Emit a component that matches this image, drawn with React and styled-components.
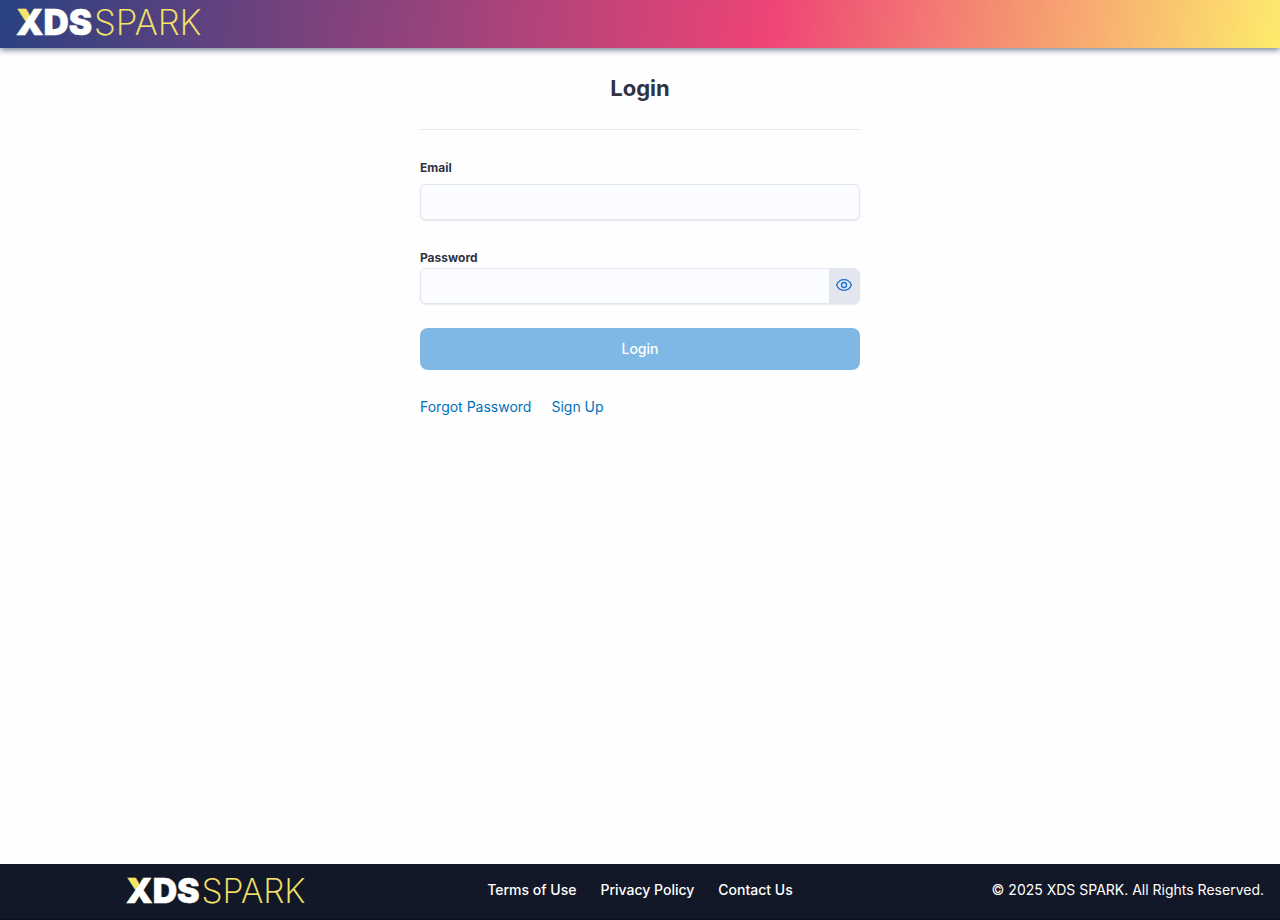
import React, { useId, useState } from "react";
import styled, { createGlobalStyle } from "styled-components";

const GlobalStyle = createGlobalStyle`
  *, *::before, *::after { box-sizing: border-box; }
  body {
    margin: 0;
    background: #fefefe;
    color: #2f3342;
    font-family: Inter, "Liberation Sans", sans-serif;
    font-size: 14px;
    line-height: 20px;
  }
`;

const Page = styled.div`
  display: flex;
  flex-direction: column;
  min-height: 100vh;
`;

const Header = styled.header`
  display: flex;
  align-items: center;
  height: 48px;
  padding: 0 16px 2px;
  background: linear-gradient(99deg, #294182, #ee4476 60%, #fdeb6d);
  box-shadow: 0 2px 6px rgba(24, 36, 72, 0.6);
`;

const LogoLink = styled.a`
  display: block;
  line-height: 0;
`;

const LogoSvg = styled.svg`
  display: block;
  width: ${(p) => p.$width}px;
  height: auto;
  overflow: visible;
`;

const Main = styled.main`
  flex: 1;
  width: 100%;
  max-width: 472px;
  margin: 0 auto;
  padding: 24px 16px;
`;

const Title = styled.h1`
  margin: 0;
  padding-bottom: 25px;
  border-bottom: 1px solid #e2e6ef;
  font-size: 22px;
  line-height: 32px;
  font-weight: 700;
  text-align: center;
`;

const Form = styled.form`
  display: flex;
  flex-direction: column;
  padding-top: 28px;
`;

const Field = styled.div`
  display: flex;
  flex-direction: column;
  gap: ${(p) => p.$gap}px;
  margin-bottom: ${(p) => p.$after}px;
`;

const Label = styled.label`
  font-size: 12px;
  line-height: 20px;
  font-weight: 700;
`;

const InputShell = styled.div`
  display: flex;
  height: 36px;
  overflow: hidden;
  border: 1px solid #e2e6ef;
  border-radius: 6px;
  background: #fbfcff;
  box-shadow: 0 1px 2px rgba(40, 50, 80, 0.1);
`;

const Input = styled.input`
  flex: 1;
  min-width: 0;
  padding: 0 12px;
  border: 0;
  outline: 0;
  background: transparent;
  color: inherit;
  font: inherit;
`;

const RevealButton = styled.button`
  display: flex;
  justify-content: center;
  width: 30px;
  padding: 8px 0 0;
  border: 0;
  background: #e3e6ee;
  color: #1b6fd0;
  cursor: pointer;
`;

const SubmitButton = styled.button`
  height: 42px;
  border: 0;
  border-radius: 8px;
  background: #7fb8e5;
  color: #fff;
  font: inherit;
  font-weight: 500;
`;

const FormLinks = styled.nav`
  display: flex;
  gap: 20px;
  padding-top: 27px;
`;

const TextLink = styled.a`
  color: #0071bd;
  text-decoration: none;
`;

const Footer = styled.footer`
  display: grid;
  grid-template-columns: repeat(3, 1fr);
  gap: 24px;
  align-items: center;
  min-height: 56px;
  padding: 0 16px 3px;
  border-bottom: 1px solid #0b101d;
  background: #121827;
  color: #fff;
  font-weight: 500;
`;

const FooterBrand = styled.div`
  display: flex;
  justify-content: center;
  padding-top: 4px;
`;

const FooterNav = styled.nav`
  display: flex;
  justify-content: center;
  gap: 24px;
  white-space: nowrap;
`;

const FooterLink = styled.a`
  color: inherit;
  text-decoration: none;
`;

const Copyright = styled.p`
  margin: 0;
  font-weight: 400;
  text-align: right;
`;

function Logo({ width }) {
  const fill = useId();
  return (
    <LogoLink href="#" aria-label="XDS Spark home">
      <LogoSvg $width={width} viewBox="0 0 186 26">
        <defs>
          <linearGradient id={fill} gradientUnits="userSpaceOnUse" x1="0" y1="0" x2="25" y2="18">
            <stop offset="0.47" stopColor="#f7e56a" />
            <stop offset="0.47" stopColor="#fff" />
          </linearGradient>
        </defs>
        <text
          y="25"
          fontFamily="Inter"
          fontSize="35"
          fontWeight="900"
          fill={`url(#${fill})`}
          stroke={`url(#${fill})`}
          strokeWidth="0.5"
        >
          XDS
        </text>
        <text
          x="78"
          y="25"
          fontFamily="Inter"
          fontSize="35"
          fontWeight="200"
          fill="#f7e56a"
          stroke="#f7e56a"
          strokeWidth="0.2"
        >
          SPARK
        </text>
      </LogoSvg>
    </LogoLink>
  );
}

function EyeIcon() {
  return (
    <svg width="16" height="16" viewBox="0 0 16 16" fill="none" stroke="currentColor" strokeWidth="1.3" aria-hidden="true">
      <path d="M.6 8C2 4.600 4.700 2.700 8 2.700S14 4.600 15.400 8C14 11.400 11.300 13.300 8 13.300S2 11.400.6 8Z" />
      <circle cx="8" cy="8" r="2.500" />
    </svg>
  );
}

export default function App() {
  const [visible, setVisible] = useState(false);
  return (
    <Page>
      <GlobalStyle />
      <Header>
        <Logo width={186} />
      </Header>
      <Main>
        <Title>Login</Title>
        <Form onSubmit={(e) => e.preventDefault()}>
          <Field $gap={6} $after={28}>
            <Label htmlFor="email">Email</Label>
            <InputShell>
              <Input id="email" type="email" />
            </InputShell>
          </Field>
          <Field $gap={0} $after={24}>
            <Label htmlFor="password">Password</Label>
            <InputShell>
              <Input id="password" type={visible ? "text" : "password"} />
              <RevealButton type="button" aria-label="Show password" onClick={() => setVisible(!visible)}>
                <EyeIcon />
              </RevealButton>
            </InputShell>
          </Field>
          <SubmitButton type="submit" disabled>Login</SubmitButton>
        </Form>
        <FormLinks>
          <TextLink href="#">Forgot Password</TextLink>
          <TextLink href="#">Sign Up</TextLink>
        </FormLinks>
      </Main>
      <Footer>
        <FooterBrand>
          <Logo width={180} />
        </FooterBrand>
        <FooterNav>
          <FooterLink href="#">Terms of Use</FooterLink>
          <FooterLink href="#">Privacy Policy</FooterLink>
          <FooterLink href="#">Contact Us</FooterLink>
        </FooterNav>
        <Copyright>© 2025 XDS SPARK. All Rights Reserved.</Copyright>
      </Footer>
    </Page>
  );
}
